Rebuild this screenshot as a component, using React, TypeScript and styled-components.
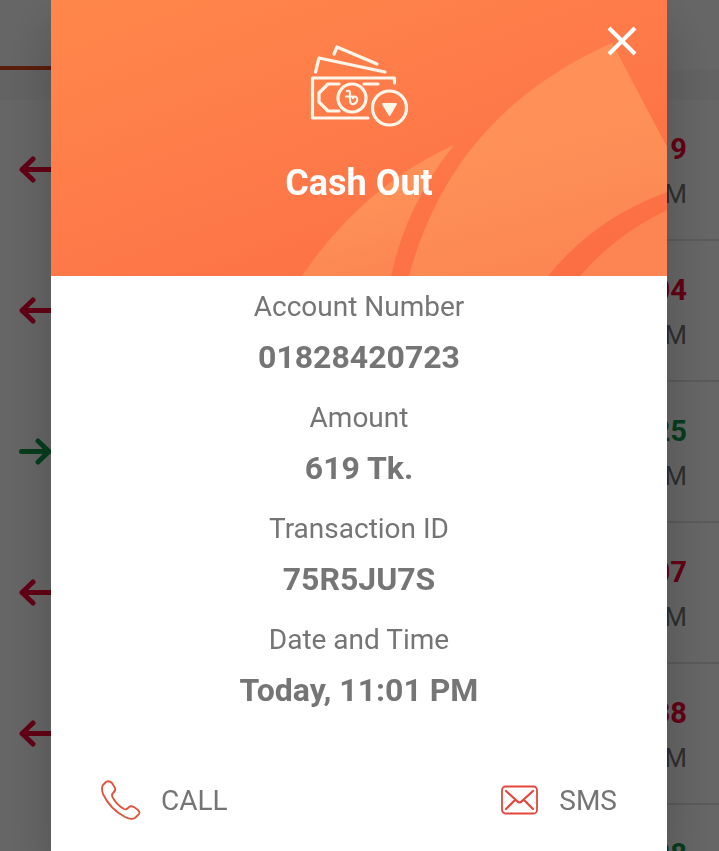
import React from "react";
import styled, { createGlobalStyle } from "styled-components";

const GlobalStyle = createGlobalStyle`
  * { box-sizing: border-box; }
  body {
    margin: 0;
    background: #ffffff;
    font-family: Roboto, "Liberation Sans", sans-serif;
  }
  p, h2, dl, dt, dd, ul { margin: 0; padding: 0; }
`;

const Screen = styled.main`
  height: 100vh;
  overflow: hidden;
  display: flex;
  flex-direction: column;
`;

const Tabs = styled.nav`
  display: grid;
  grid-template-columns: 1fr 1fr;
  height: 70px;
  flex: none;
  background: #ffffff;
`;

const Tab = styled.button<{ $active?: boolean }>`
  border: 0;
  background: none;
  border-bottom: 4px solid ${(p) => (p.$active ? "#e04a1c" : "transparent")};
`;

const Spacer = styled.div`
  height: 30px;
  flex: none;
  background: #f8f8f8;
`;

const List = styled.ul`
  list-style: none;
`;

const Row = styled.li`
  display: flex;
  align-items: center;
  gap: 20px;
  height: 141px;
  padding-left: 18px;
`;

const RowText = styled.div`
  flex: 1;
  height: 100%;
  display: flex;
  flex-direction: column;
  justify-content: center;
  align-items: flex-end;
  gap: 13px;
  padding: 2px 32px 0 0;
  border-bottom: 2px solid #e2e2e2;
`;

const RowAmount = styled.p<{ $income: boolean }>`
  font-size: 29px;
  line-height: 34px;
  font-weight: 700;
  color: ${(p) => (p.$income ? "#109848" : "#f80034")};
`;

const RowTime = styled.p`
  font-size: 26px;
  line-height: 30px;
  color: #757575;
`;

const Overlay = styled.div`
  position: fixed;
  inset: 0;
  display: flex;
  padding: 0 52px 0 51px;
  background: rgba(0, 0, 0, 0.6);
`;

const Dialog = styled.section`
  flex: 1;
  display: flex;
  flex-direction: column;
  background: #ffffff;
  box-shadow: 0 24px 48px rgba(0, 0, 0, 0.22);
`;

const Hero = styled.header`
  position: relative;
  display: flex;
  flex-direction: column;
  align-items: center;
  height: 276px;
  flex: none;
  padding-top: 40px;
  overflow: hidden;
  background: linear-gradient(160deg, #ff874b 0%, #fe7a49 50%, #fb6c43 100%);
`;

const Petals = styled.svg`
  position: absolute;
  right: 0;
  bottom: 0;
`;

const CashIcon = styled.svg`
  position: relative;
`;

const Title = styled.h2`
  position: relative;
  margin-top: 32px;
  font-size: 36px;
  line-height: 42px;
  font-weight: 700;
  color: #ffffff;
`;

const CloseButton = styled.button`
  position: absolute;
  top: 21px;
  right: 25px;
  width: 40px;
  height: 40px;
  padding: 0;
  border: 0;
  background: none;
  cursor: pointer;
`;

const Details = styled.dl`
  display: flex;
  flex-direction: column;
  gap: 25px;
  padding-top: 14px;
  text-align: center;
  color: #757575;
`;

const Detail = styled.div`
  display: flex;
  flex-direction: column;
  gap: 15px;
`;

const Label = styled.dt`
  font-size: 28px;
  line-height: 33px;
`;

const Value = styled.dd`
  font-size: 32px;
  line-height: 38px;
  font-weight: 700;
`;

const Actions = styled.footer`
  display: flex;
  justify-content: space-between;
  margin-top: auto;
  padding: 0 50px 28px 49px;
`;

const Action = styled.button`
  display: flex;
  align-items: center;
  gap: 19px;
  padding: 0;
  border: 0;
  background: none;
  font-family: inherit;
  font-size: 28px;
  line-height: 33px;
  color: #757575;
  cursor: pointer;
`;

const entries = [
  { amount: "619", time: "11:01 PM", income: false },
  { amount: "504", time: "10:42 PM", income: false },
  { amount: "525", time: "10:15 PM", income: true },
  { amount: "507", time: "09:37 PM", income: false },
  { amount: "538", time: "08:20 PM", income: false },
  { amount: "528", time: "07:55 PM", income: true },
];

const details = [
  { label: "Account Number", value: "01828420723" },
  { label: "Amount", value: "619 Tk." },
  { label: "Transaction ID", value: "75R5JU7S" },
  { label: "Date and Time", value: "Today, 11:01 PM" },
];

function Arrow({ income }: { income: boolean }) {
  return (
    <svg
      width="36"
      height="30"
      viewBox="0 0 36 30"
      fill="none"
      stroke={income ? "#109848" : "#f80034"}
      strokeWidth="5"
      strokeLinecap="round"
      strokeLinejoin="round"
      aria-hidden="true"
    >
      {income ? <path d="M3.5 13.500H31M20 3L31 13.500 20 24" /> : <path d="M34 13.500H4M15 3L4 13.500 15 24" />}
    </svg>
  );
}

export default function App() {
  return (
    <>
      <GlobalStyle />
      <Screen>
        <Tabs>
          <Tab $active aria-label="Statement" />
          <Tab aria-label="Summary" />
        </Tabs>
        <Spacer />
        <List>
          {entries.map((e) => (
            <Row key={e.time}>
              <Arrow income={e.income} />
              <RowText>
                <RowAmount $income={e.income}>{e.amount}</RowAmount>
                <RowTime>{e.time}</RowTime>
              </RowText>
            </Row>
          ))}
        </List>
      </Screen>
      <Overlay>
        <Dialog role="dialog" aria-modal="true" aria-labelledby="dialog-title">
          <Hero>
            <Petals width="377" height="276" viewBox="290 0 377 276" aria-hidden="true">
              <defs>
                <linearGradient id="petal" x1="0" y1="0" x2="0.3" y2="1">
                  <stop offset="0" stopColor="#ff9156" />
                  <stop offset="0.5" stopColor="#fe9158" />
                  <stop offset="1" stopColor="#fc8753" />
                </linearGradient>
              </defs>
              <path fill="url(#petal)" d="M302 276Q362 187 454 145Q407 203 391 276Z" />
              <path fill="url(#petal)" d="M409 276C438 169 503 92 612 43L667 147V192Q595 218 548 276Z" />
              <path fill="#fd8453" d="M580 276Q615 235 667 210V276Z" />
            </Petals>
            <CashIcon width="100" height="90" viewBox="309 40 100 90" fill="none" stroke="#fff6ea" strokeWidth="3.200" strokeLinecap="round" strokeLinejoin="round" aria-hidden="true">
              <path d="M334 54L337 47L377 64M315.500 72L319 58L385 72" />
              <path d="M368 118H312.500V78H394.500V83" />
              <path d="M339 84H328L319 93V102L328 111H339M364 84H378" />
              <circle cx="352" cy="98" r="14" />
              <circle cx="389.500" cy="108" r="17" />
              <path strokeWidth="2" d="M383 104H396L389.500 115Z" fill="#fff6ea" />
              <path strokeWidth="2.200" d="M347 91Q350 90 350 93V100Q350 105 354 104Q358 102 357 98Q355 95 353 98M346 96.500H353" />
            </CashIcon>
            <Title id="dialog-title">Cash Out</Title>
            <CloseButton aria-label="Close">
              <svg width="40" height="40" viewBox="0 0 40 40" fill="none" stroke="#ffffff" strokeWidth="4" aria-hidden="true">
                <path d="M7 7L33 33M33 7L7 33" />
              </svg>
            </CloseButton>
          </Hero>
          <Details>
            {details.map((d) => (
              <Detail key={d.label}>
                <Label>{d.label}</Label>
                <Value>{d.value}</Value>
              </Detail>
            ))}
          </Details>
          <Actions>
            <Action>
              <svg width="42" height="46" viewBox="0 0 42 46" fill="none" stroke="#e0533c" strokeWidth="1.800" strokeLinejoin="round" aria-hidden="true">
                <path d="M3 8L6 5Q9 3 12 6L15 11Q16 14 13 16Q11 18 13 21Q17 28 24 32Q26 33 28 31Q30 28 34 30L38 33Q41 36 38 38L35 41Q31 43 25 40Q10 32 3 17Q1 11 3 8Z" />
              </svg>
              CALL
            </Action>
            <Action>
              <svg width="40" height="46" viewBox="0 0 40 46" fill="none" stroke="#e0483a" strokeWidth="1.800" strokeLinecap="round" strokeLinejoin="round" aria-hidden="true">
                <rect x="2" y="9.500" width="35" height="27" rx="3.500" />
                <path strokeWidth="2.200" d="M6 14L17 24Q19.500 27 22 24L33 14M6 32L15 23M33 32L24 23" />
              </svg>
              SMS
            </Action>
          </Actions>
        </Dialog>
      </Overlay>
    </>
  );
}
